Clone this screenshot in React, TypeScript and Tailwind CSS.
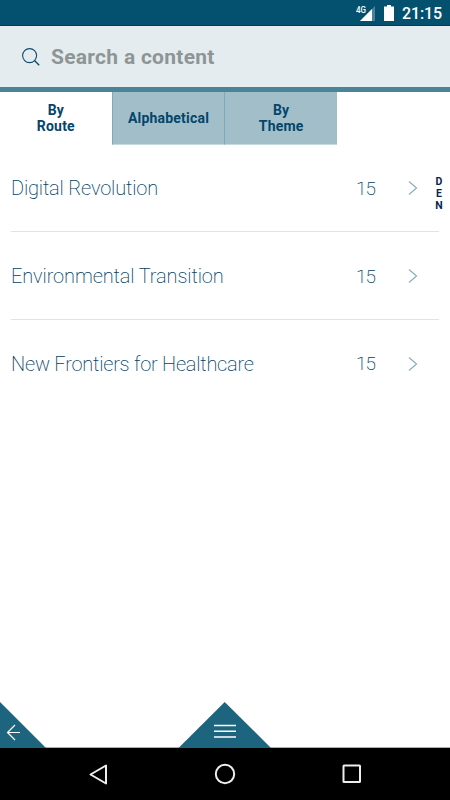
import clsx from "clsx";

const tabs = [
  { lines: ["By", "Route"], active: true },
  { lines: ["Alphabetical"], active: false },
  { lines: ["By", "Theme"], active: false },
];

const routes = [
  { title: "Digital Revolution", count: 15, tracking: "tracking-[-0.18px]" },
  { title: "Environmental Transition", count: 15, tracking: "tracking-[-0.12px]" },
  { title: "New Frontiers for Healthcare", count: 15, tracking: "tracking-[-0.24px]" },
];

function StatusBar() {
  return (
    <div className="flex h-[26px] shrink-0 items-center justify-end border-b border-[#043a5c] bg-[#04516f] pr-2 text-white">
      <svg className="mr-[9px]" width="19" height="18" viewBox="0 0 19 18">
        <path d="M19 2V17H4Z" fill="#4a8298" />
        <path d="M16 5V17H4Z" fill="#fff" />
        <text
          x="0"
          y="9"
          fontSize="9"
          fontFamily="Roboto, sans-serif"
          fontWeight="500"
          fill="#fff"
          stroke="#04516f"
          strokeWidth="1.5"
          paintOrder="stroke"
          textLength="10"
          lengthAdjust="spacingAndGlyphs"
        >
          4G
        </text>
      </svg>
      <svg className="mr-2" width="10" height="16" viewBox="0 0 10 16">
        <path d="M3 0h4v1.5h3V16H0V1.5h3Z" fill="#fff" />
      </svg>
      <span className="mt-[3px] text-[16px] leading-none font-medium tracking-[-0.1px]">21:15</span>
    </div>
  );
}

function SearchBar() {
  return (
    <div className="flex h-[66px] shrink-0 items-center border-b-[5px] border-[#4a8499] bg-[#e5ecef] pl-[22px]">
      <svg width="18" height="18" viewBox="0 0 18 18" fill="none" stroke="#12496e" strokeWidth="1.1">
        <circle cx="7.6" cy="7.6" r="7" />
        <path d="M12.5 12.5L17.2 17.2" strokeWidth="1.4" />
      </svg>
      <span className="mt-px ml-[11px] text-[21px] leading-none font-bold tracking-[0.28px] text-[#8e9595]">
        Search a content
      </span>
    </div>
  );
}

function Tabs() {
  return (
    <div className="flex h-[53px] w-[337px] shrink-0 text-[#04456b]">
      {tabs.map((tab) => (
        <button
          key={tab.lines.join(" ")}
          className={clsx(
            "flex flex-1 flex-col items-center justify-center text-[14px] leading-4 font-bold tracking-[0.2px]",
            tab.active
              ? "bg-white pb-0.5"
              : "border-b border-l border-b-[#c8d9de] border-l-[#7fa9b6] bg-[#a2bfc9]",
          )}
        >
          {tab.lines.map((line) => (
            <span key={line}>{line}</span>
          ))}
        </button>
      ))}
    </div>
  );
}

function RouteList() {
  return (
    <div className="relative flex-1">
      <ul className="-mt-px px-[11px]">
        {routes.map((route, i) => (
          <li
            key={route.title}
            className={clsx(
              "flex h-[88px] items-center text-[20px] leading-none font-extralight text-[#033f66]",
              i < routes.length - 1 ? "border-b border-[#dce5ea] pt-px" : "pb-px",
            )}
          >
            <span className={clsx("flex-1", route.tracking)}>{route.title}</span>
            <span className="w-[52px] text-[19px] tracking-[-1px]">{route.count}</span>
            <svg className="mr-[21px]" width="10" height="14" viewBox="0 0 10 14" fill="none" stroke="#8fb2bf" strokeWidth="1.3">
              <path d="M1 0.5L8.5 7L1 13.5" />
            </svg>
          </li>
        ))}
      </ul>
      <div className="absolute top-[31px] right-[7px] flex w-2 flex-col items-center text-[10.5px] leading-3 font-bold text-[#06264d]">
        <span>D</span>
        <span>E</span>
        <span>N</span>
      </div>
    </div>
  );
}

function BottomActions() {
  return (
    <div className="flex h-[47px] shrink-0 border-b border-[#a3afb3]">
      <svg className="-mb-px" width="46" height="47" viewBox="0 0 46 47" fill="none">
        <path d="M0 1L46 47H0Z" fill="#1d657f" />
        <path d="M20 31.5H7.5M15 24L7.5 31.5L15 39" stroke="#fff" strokeWidth="1.2" />
      </svg>
      <svg className="-mb-px ml-[132px]" width="94" height="47" viewBox="0 0 94 47" fill="none">
        <path d="M46.7 1L93 47H0.5Z" fill="#1d657f" />
        <path d="M36 24.5H58M36 30.3H58M36 36H58" stroke="#fff" strokeWidth="1.4" />
      </svg>
    </div>
  );
}

function NavBar() {
  return (
    <div className="flex h-[52px] shrink-0 items-center bg-black pl-[89px]">
      <svg width="18" height="21" viewBox="0 0 18 21" fill="none" stroke="#eee" strokeWidth="2" strokeLinejoin="round">
        <path d="M17 1.5V19.5L1.5 10.5Z" />
      </svg>
      <svg className="ml-[107px]" width="22" height="22" viewBox="0 0 22 22" fill="none" stroke="#eee" strokeWidth="2">
        <circle cx="11" cy="11" r="9.2" />
      </svg>
      <svg className="ml-[106px]" width="20" height="20" viewBox="0 0 20 20" fill="none" stroke="#eee" strokeWidth="2">
        <rect x="1.5" y="1.5" width="16.5" height="16.5" rx="0.5" />
      </svg>
    </div>
  );
}

export default function App() {
  return (
    <div className="flex h-[800px] w-[450px] flex-col overflow-hidden bg-white font-[Roboto,sans-serif]">
      <StatusBar />
      <SearchBar />
      <Tabs />
      <RouteList />
      <BottomActions />
      <NavBar />
    </div>
  );
}
